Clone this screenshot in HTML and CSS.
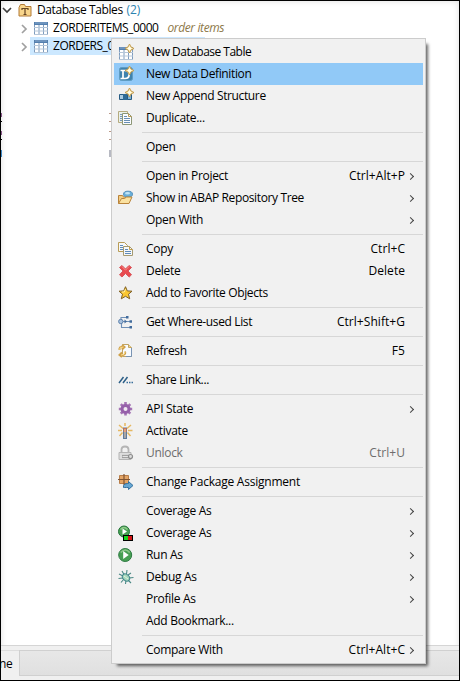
FILE: index.html
```html
<!DOCTYPE html>
<html lang="en">
<head>
<meta charset="utf-8">
<title>Database Tables</title>
<link rel="stylesheet" href="styles.css">
</head>
<body>
<div class="window">
  <div class="tree">
    <div class="node root">
      <svg class="chev" width="10" height="10" viewBox="0 0 10 10"><path d="M1 3l4 4 4-4" fill="none" stroke="#404040" stroke-width="1.7"/></svg>
      <svg class="nicon" width="14" height="14" viewBox="0 0 14 14"><path d="M1 4.500l1.500-3h4l1 2H13v9.500H1z" fill="#f8d58b" stroke="#b27a36"/><path d="M4 7V5.500h6V7M7 5.500v6M5.500 11.500h3" fill="none" stroke="#644423" stroke-width="1.200"/></svg>
      <span>Database Tables <span class="count">(2)</span></span>
    </div>
    <div class="node child">
      <svg class="chev" width="8" height="10" viewBox="0 0 8 10"><path d="M2 1l4 4-4 4" fill="none" stroke="#a0a0a0" stroke-width="1.700"/></svg>
      <span class="item"><svg class="ticon" width="14" height="13" viewBox="0 0 14 13"><use href="#table"/></svg><span class="name">ZORDERITEMS_0000</span></span><i class="desc">order items</i>
    </div>
    <div class="node child">
      <svg class="chev" width="8" height="10" viewBox="0 0 8 10"><path d="M2 1l4 4-4 4" fill="none" stroke="#a0a0a0" stroke-width="1.700"/></svg>
      <span class="item selected"><svg class="ticon" width="14" height="13" viewBox="0 0 14 13"><use href="#table"/></svg><span class="name">ZORDERS_0000</span></span>
    </div>
  </div>
  <div class="editor">
    <div class="sliver"><b class="l1"></b><b class="r1"></b></div>
    <div class="sliver"><b class="l1"></b><b class="r1"></b></div>
    <div class="sliver"><b class="l2"></b><b class="r2"></b></div>
  </div>
  <div class="tabs"><span class="tab">ne</span><span class="rest"></span></div>
</div>

<div class="menu">
  <div class="row"><svg viewBox="0 0 16 16"><use href="#table" transform="translate(1 3)"/><use href="#plus"/></svg><span class="tight">New Database Table</span></div>
  <div class="row hot"><svg viewBox="0 0 16 16"><rect x="1.500" y="1.500" width="13" height="13" rx="2" fill="#3f83ae" stroke="#5f9cc2"/><path d="M2.500 4.500h4.500c5.500 0 5.500 8 0 8H2.500M5 4.500v8" fill="none" stroke="#fff" stroke-width="1.700"/><use href="#plus"/></svg><span class="snug">New Data Definition</span></div>
  <div class="row"><svg viewBox="0 0 16 16"><path d="M1.500 6.500h8v5h-8z" fill="#fff" stroke="#265b83"/><path d="M2 7h3v4H2z" fill="#a9cae0"/><path d="M5 6h4v6H5z" fill="#2f6b96"/><path d="M9.500 6.500h4v5h-4z" fill="#7fb3d6" stroke="#265b83"/><use href="#plus"/></svg><span class="snug">New Append Structure</span></div>
  <div class="row"><svg viewBox="0 0 16 16"><path d="M.5 1.500h9v11h-9z" fill="#e9f0ec" stroke="#b5ab7e"/><path d="M2 4.500h2M2 6.500h2M2 8.500h2M2 10.500h2" stroke="#7898ba"/><path d="M4.500 3.500h6l3 3v8h-9z" fill="#fbfcff" stroke="#8c9777"/><path d="M10.500 3.500v3h3" fill="none" stroke="#bd9a4f"/><path d="M6 6.500h3M6 8.500h6M6 10.500h6M6 12.500h6" stroke="#688fb5"/></svg><span>Duplicate...</span></div>
  <hr>
  <div class="row"><i></i><span>Open</span></div>
  <hr>
  <div class="row"><i></i><span>Open in Project</span><kbd>Ctrl+Alt+P</kbd><em></em></div>
  <div class="row"><svg viewBox="0 0 16 16"><path d="M.5 13.500v-8h4l1 1.500h5v2" fill="#f3ce86" stroke="#b98339"/><ellipse cx="10" cy="4.200" rx="4.500" ry="3" fill="#69afd9" stroke="#5792bd"/><ellipse cx="9.500" cy="3.200" rx="2.500" ry="1.200" fill="#c0e4f6"/><path d="M.5 13.500l3-5h3l2-1.500H14l-3 6.500z" fill="#fae1a0" stroke="#b98339"/></svg><span class="snug">Show in ABAP Repository Tree</span><em></em></div>
  <div class="row"><i></i><span>Open With</span><em></em></div>
  <hr>
  <div class="row"><svg viewBox="0 0 16 16"><path d="M.5 1.500h6l3 3v6h-9z" fill="#f6f8fa" stroke="#b99c55"/><path d="M2 4.500h3M2 6.500h6M2 8.500h4" stroke="#5f8bb9"/><path d="M5.500 5.500h6l3 3v6h-9z" fill="#f6f8fa" stroke="#a69a70"/><path d="M11.500 5.500v3h3" fill="none" stroke="#c49d47"/><path d="M7 8.500h3M7 10.500h6M7 12.500h6" stroke="#5f8bb9"/></svg><span>Copy</span><kbd>Ctrl+C</kbd><em class="none"></em></div>
  <div class="row"><svg viewBox="0 0 16 16"><path d="M4 2.500L7.500 6 11 2.500 13.500 4.500 10 8l3.500 3.800-2.300 2.200L7.500 10.500 4 14 1.500 11.800 5 8 1.500 4.500z" fill="#e94b4f" stroke="#d9545a" stroke-linejoin="round"/><path d="M4 3.600L7.500 7.200l3.500-3.600" fill="none" stroke="#f68b87"/></svg><span>Delete</span><kbd>Delete</kbd><em class="none"></em></div>
  <div class="row"><svg viewBox="0 0 16 16"><path d="M7.500 1.700l1.800 4.200 4.700.3-3.500 3 1.200 4.600-4.200-2.500-4.200 2.500 1.200-4.600-3.500-3 4.700-.3z" fill="#fcc730" stroke="#806125" stroke-linejoin="round"/><path d="M7.500 4L6.300 7H4" fill="none" stroke="#fff0a0"/></svg><span class="snug">Add to Favorite Objects</span></div>
  <hr>
  <div class="row"><svg viewBox="0 0 16 16"><path d="M3 5V3.500h6M5 7.500h7M3.500 10v3.500h9" fill="none" stroke="#6f8fb6" stroke-width="1.100"/><circle cx="2.800" cy="7.500" r="2.200" fill="#a8c0dc" stroke="#5c80ac"/><path d="M6.500 5.500v4l2.500-2zM8 2h2.500v2.500H8zM11.500 6.300H14v2.500h-2.500zM11.500 12H14v2.500h-2.500z" fill="#416b9c"/></svg><span class="snug">Get Where-used List</span><kbd>Ctrl+Shift+G</kbd><em class="none"></em></div>
  <hr>
  <div class="row"><svg viewBox="0 0 16 16"><path d="M4.500 1.500h6l3 3v9h-9z" fill="#f8fbff" stroke="#c0a364"/><path d="M13.500 5v8.500H8" fill="none" stroke="#7994b4"/><path d="M10.500 1.500v3h3" fill="#f0d890" stroke="#c0a364"/><path d="M1.500 7V5.500Q2 3.500 4.500 4h1M4 2l2.500 2L4 6.500M7 8.500q1 3-2 3.500H2M4 9.500L1.500 12 4 14" fill="none" stroke="#cfa048" stroke-width="2"/><path d="M1.500 6.500q0-2.500 4-2.500M7 9q0 3-4 3" fill="none" stroke="#ffe395" stroke-width=".9"/></svg><span>Refresh</span><kbd>F5</kbd><em class="none"></em></div>
  <hr>
  <div class="row"><svg viewBox="0 0 16 16"><path d="M1 11l4.500-6M5 11l4.500-6" stroke="#2e6088" stroke-width="1.500"/><path d="M8.500 10.500H10M11 10.500h1.500M13.500 10.500H15" stroke="#386e9b" stroke-width="1.300"/></svg><span class="snug">Share Link...</span></div>
  <hr>
  <div class="row"><svg viewBox="0 0 16 16"><g stroke="#a574b5" stroke-width="2.600"><path d="M7.500 1v13.500M.800 8h13.400M2.800 3.200l9.500 9.500M12.300 3.200l-9.500 9.500"/></g><circle cx="7.500" cy="8" r="3.500" fill="#f0eaf2" stroke="#9660aa" stroke-width="3"/></svg><span>API State</span><em></em></div>
  <div class="row"><svg viewBox="0 0 16 16"><path d="M7 0v3M1 2l4 3.500M13 2L9 5.500M0 7.500h4M10 7.500h4.500M1.500 13L4.500 9.500M12.500 13L9.500 9.500" stroke="#e6b862" stroke-width="1.500"/><path d="M5 4.500h4V16H5z" fill="#607b9c"/><path d="M5.500 5h3v4h-3z" fill="#d5744e"/><path d="M6.500 6h1v9h-1z" fill="#f0d0ac"/></svg><span>Activate</span></div>
  <div class="row off"><svg viewBox="0 0 16 16"><path d="M3.500 7V4.500q0-3 3.500-3t3.500 3V7" fill="none" stroke="#b4b4b4" stroke-width="1.800"/><path d="M1 7.500h12v7H1z" fill="#ddd" stroke="#b4b4b4"/><path d="M4 11.500h8" stroke="#9a9a9a" stroke-width="3.200"/><path d="M4.500 11.500H11" stroke="#e4e4e4" stroke-width="1.200"/><circle cx="12.500" cy="11.500" r="2" fill="#ddd" stroke="#8e8e8e" stroke-width="1.200"/></svg><span>Unlock</span><kbd>Ctrl+U</kbd><em class="none"></em></div>
  <hr>
  <div class="row"><svg viewBox="0 0 16 16"><path d="M1.500 1.500h9v8h-9z" fill="#e4a566" stroke="#b87e49"/><path d="M6 0v11M0 5.500h12" stroke="#805432" stroke-width="1.200"/><path d="M5.500 13.500v-2q1-2 4-2h1v-2l4.500 4-4.500 4v-2h-2q-2 0-3 0z" fill="#65a6d2" stroke="#34719f"/></svg><span class="wide">Change Package Assignment</span></div>
  <hr>
  <div class="row"><i></i><span>Coverage As</span><em></em></div>
  <div class="row"><svg viewBox="0 0 16 16"><circle cx="6" cy="6.500" r="5.500" fill="#45a052" stroke="#26743b"/><path d="M2.500 4.500q3.500-4 7 0" fill="none" stroke="#90ca89" stroke-width="1.500"/><path d="M4.500 3.500l4.500 3-4.500 3z" fill="#fff"/><path d="M5 10h10v6H5z" fill="#000"/><path d="M6 11h4v4H6z" fill="#13d51d"/><path d="M10 11h4v4h-4z" fill="#d11515"/></svg><span>Coverage As</span><em></em></div>
  <div class="row"><svg viewBox="0 0 16 16"><circle cx="7.200" cy="8" r="6.500" fill="#489f53" stroke="#2c7a42"/><path d="M2.700 5.500q4.500-5 9 0" fill="none" stroke="#8cc588" stroke-width="1.700"/><path d="M5.200 4l5.500 4-5.500 4z" fill="#fff"/></svg><span>Run As</span><em></em></div>
  <div class="row"><svg viewBox="0 0 16 16"><path d="M4 2l2 3.500M9 1L8.500 5M13 4l-3 2M1 5l4 2M.5 9.500L5 9M3 13.500L6 10M7.500 15l.5-4M13 14l-3-3M15.500 8.500L11 9" stroke="#4b8985" stroke-width="1.100"/><ellipse cx="8" cy="8.500" rx="4" ry="3" transform="rotate(40 8 8.500)" fill="#a5d6bc" stroke="#3f868a"/><path d="M6 7l4 3" stroke="#e2f5dc"/></svg><span>Debug As</span><em></em></div>
  <div class="row"><i></i><span>Profile As</span><em></em></div>
  <div class="row"><i></i><span>Add Bookmark...</span></div>
  <hr>
  <div class="row"><i></i><span>Compare With</span><kbd>Ctrl+Alt+C</kbd><em></em></div>
</div>

<svg class="defs" width="0" height="0">
  <defs>
    <g id="table"><path d="M.5.5h13v12H.5z" fill="#fff"/><path d="M0 0h14v3H0z" fill="#547fae"/><path d="M.5 3v10M5 3v10M9.500 3v10M13.500 3v10" stroke="#7d9bbd"/><path d="M0 5.500h14M0 9h14M0 12.500h14" stroke="#b5c6d8"/><path d="M1 1h12" stroke="#88a9cc"/></g>
    <g id="plus"><path d="M11.500 0l1.500 3 3 1.500-3 1.500-1.500 3L10 6 7 4.500 10 3z" fill="#fff3c4" stroke="#c39a4c"/><path d="M11.500 3v3M10 4.500h3" stroke="#fffdf0"/></g>
  </defs>
</svg>
</body>
</html>
```

FILE: styles.css
```css
* { box-sizing: border-box; }
body {
  margin: 0;
  width: 460px;
  height: 681px;
  overflow: hidden;
  position: relative;
  font: 12px/18px "Open Sans", "Noto Sans", sans-serif;
  letter-spacing: -0.3px;
  color: #000;
}
.window {
  display: flex;
  flex-direction: column;
  height: 681px;
  border: 1px solid #000;
  background: #fff;
  box-shadow: inset 0 0 6px #ddd;
}
.tree { height: 112px; }
.node { display: flex; align-items: center; height: 18px; white-space: pre; }
.root { padding-left: 1px; letter-spacing: -0.42px; }
.root .nicon { margin: 0 5px 0 6px; }
.count { color: #2d83b0; margin-left: 1px; letter-spacing: 0; }
.child { padding-left: 19px; }
.child .chev { margin: 2px 2px 0 0; }
.item { display: flex; align-items: center; height: 18px; padding-left: 4px; }
.selected { width: 175px; background: #cce8ff; }
.ticon { margin-right: 5px; }
.name { letter-spacing: -0.48px; }
.desc { color: #8d7848; margin-left: 9px; letter-spacing: -0.38px; }
.editor { flex: 1; }
.sliver { display: flex; justify-content: space-between; width: 110px; height: 18px; }
.sliver b { width: 2px; height: 9px; }
.sliver .l1 { width: 1px; border-bottom: 1px solid #000; border-top: 4px solid #858; }
.r1 { border-block: 1px solid #b98; }
.sliver .l2 { width: 1px; height: 7px; margin-top: 1px; background: #3c88c4; }
.sliver .r2 { height: 7px; margin-top: 1px; background: #b7b9c2; }
.tabs {
  display: flex;
  height: 35px;
  padding: 4px 0 4px;
  background: #f0f0f0;
  border-top: 1px solid #d5d5d5;
}
.tab { width: 18px; padding: 5px 0 0; line-height: 16px; border-top: 1px solid #ddd; text-indent: -2px; }
.rest { flex: 1; background: linear-gradient(#e7e7e7, #e0e0e0); border: 1px solid #d0d0d0; border-right: 0; }
.menu {
  position: absolute;
  left: 111px;
  top: 38px;
  width: 315px;
  padding: 2px;
  border: 1px solid #ccc;
  background: #f1f1f1;
  box-shadow: 4px 4px 3px -2px rgba(0, 0, 0, .6);
}
.row { display: flex; align-items: center; height: 22px; padding: 0 8px 0 4px; white-space: pre; }
.row > svg, .row > i { flex: none; width: 16px; height: 16px; margin-right: 12px; }
.row > span { flex: 1; }
.row > .tight { letter-spacing: -0.52px; }
.row > .snug { letter-spacing: -0.37px; }
.row > .wide { letter-spacing: -0.23px; }
.hot { background: #91c9f7; }
.off { color: #6d6d6d; }
hr { height: 1px; margin: 3px 0 3px 28px; border: 0; background: #d7d7d7; }
kbd { font: inherit; letter-spacing: 0.05px; }
em {
  width: 5px;
  height: 5px;
  margin: 0 2px 0 3px;
  border: solid #444;
  border-width: 1.400px 1.400px 0 0;
  transform: rotate(45deg);
}
kbd + em { margin-left: 3px; }
em.none { border: 0; }
.defs { position: absolute; }
```
